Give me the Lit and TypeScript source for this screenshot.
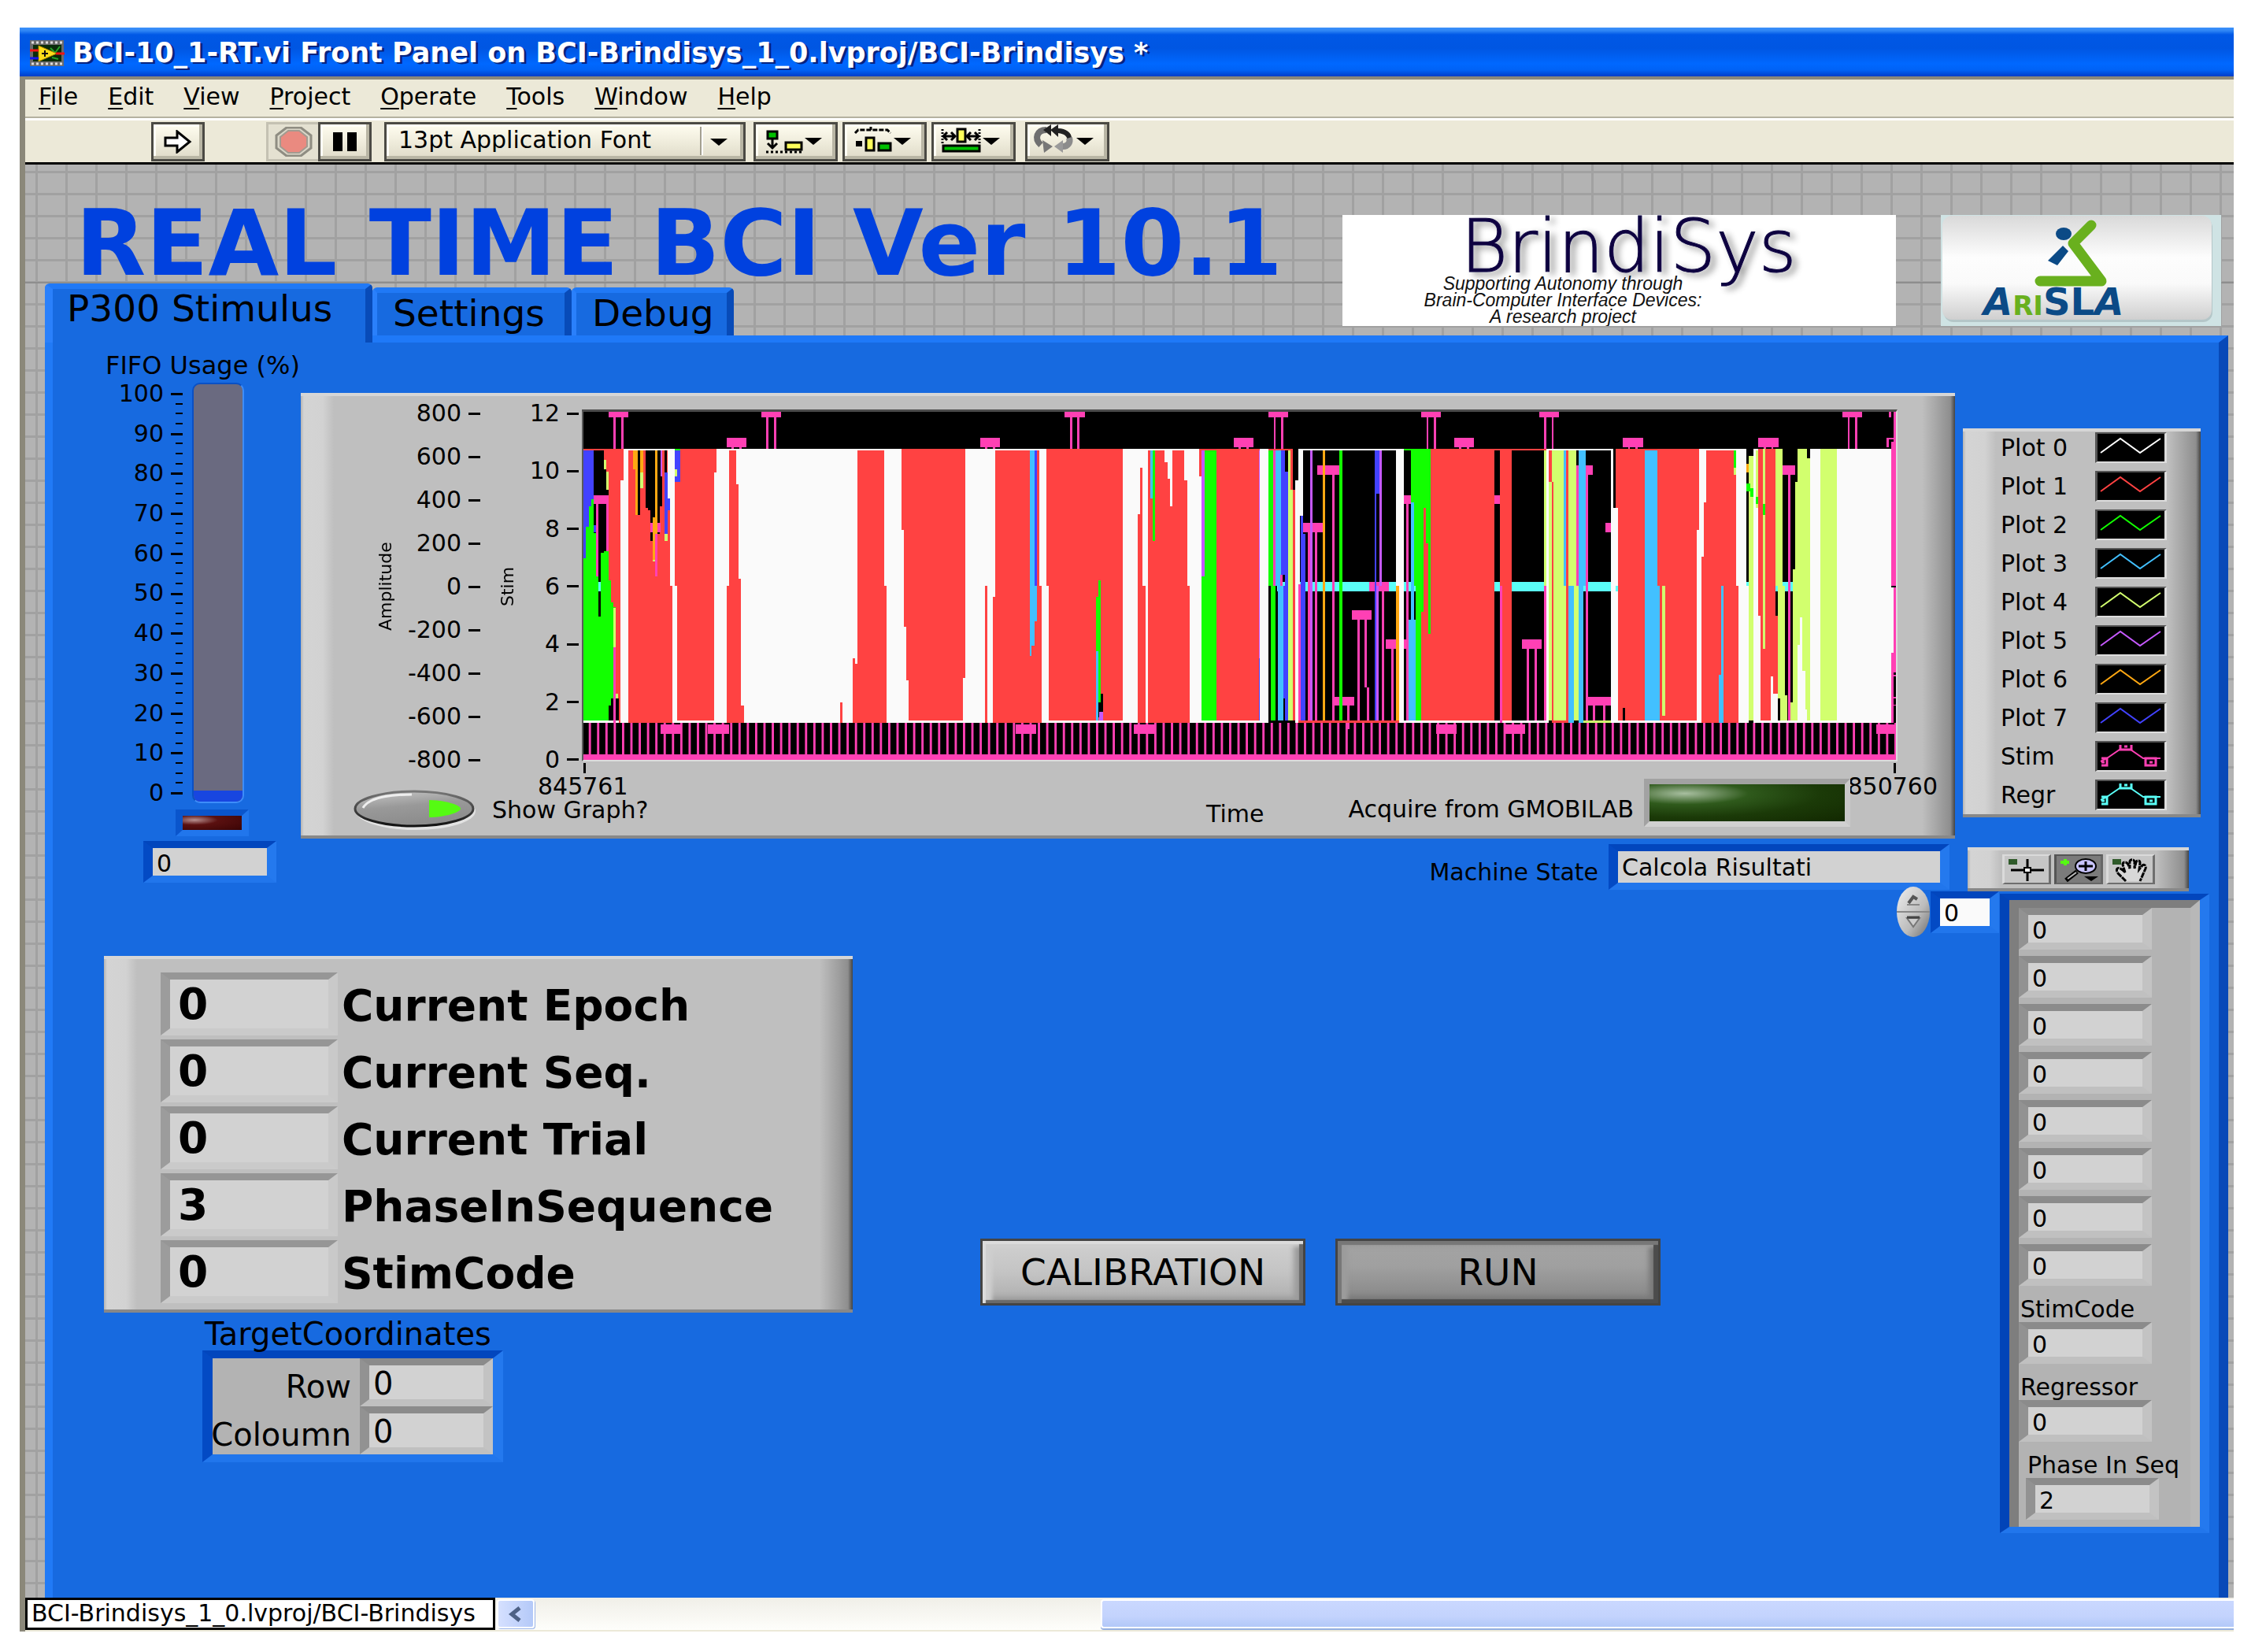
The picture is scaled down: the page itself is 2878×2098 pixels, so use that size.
import { LitElement, html, svg, css, nothing } from "lit";
import { customElement, property } from "lit/decorators.js";

const PINK = "#ff40b4";
const RED = "#ff4242";
const GREEN = "#12ff00";
const BLUE = "#4242ff";
const SKY = "#42c0ff";
const LIME = "#d2ff6e";
const PURPLE = "#c659ff";
const ORANGE = "#ffa812";
const CYAN = "#5afff8";
const WHITE = "#fafafa";
const BLACK = "#000";

/* One painted block of the chart: colour, left, right, top, bottom. */
type Block = [string, number, number, number?, number?];
/* One stepped outline of the chart: colour, points. */
type Outline = [string, string];

const earlyOutlines: Outline[] = [
  [BLUE, "37,216 60,216 60,530 43,530 43,627 37,627"],
  [GREEN, "37,627 43,627 43,508 49,508 49,430 54,430 54,402 60,402 60,530 65,530 65,695 70,695 70,850 76,850 76,605 82,605 82,600 92,600 92,712 98,712 98,796 109,796 109,1163 98,1163 98,1190 92,1190 92,1247 37,1247"],
  [RED, "82,210 125,210 125,330 119,330 119,1254 115,1254 115,1163 109,1163 109,812 104,812 104,796 98,796 98,712 92,712 92,295 87,295 87,252 82,252"],
  [RED, "136,216 223,216 223,443 228,443 228,732 234,732 234,1254 136,1254"],
  [BLACK, "157,216 217,216 217,430 206,430 206,533 190,533 190,562 185,562 185,443 180,443 180,436 174,436 174,216 163,216 163,463 157,463"],
  [RED, "251,210 332,210 332,300 327,300 327,1247 245,1247 245,732 239,732 239,315 251,315"],
  [RED, "360,216 375,216 375,345 381,345 381,704 386,704 386,1190 392,1190 392,1254 354,1254 354,732 360,732"],
  [RED, "643,216 702,216 702,733 708,733 708,1254 632,1254 632,1008 638,1008 638,1029 643,1029"],
  [RED, "740,210 882,210 882,1085 877,1085 877,1247 757,1247 757,1093 752,1093 752,888 746,888 746,520 740,520"],
  [RED, "948,216 1045,216 1045,732 1051,732 1051,1254 943,1254 943,775 948,775"],
  [RED, "1062,210 1231,210 1231,1247 1067,1247 1067,732 1062,732"],
  [RED, "1269,280 1274,280 1274,732 1280,732 1280,1254 1264,1254 1264,458 1269,458"],
  [RED, "1286,216 1323,216 1323,260 1329,260 1329,322 1334,322 1334,430 1340,430 1340,216 1367,216 1367,330 1373,330 1373,732 1378,732 1378,1254 1286,1254"],
];

const earlyBlocks: Block[] = [
  [RED, 37, 125, 210, 216],
  [PINK, 60, 92, 387, 421],
  [PINK, 65, 70, 421, 695],
  [PINK, 87, 92, 421, 600],
  [BLUE, 60, 65, 500, 527],
  [CYAN, 70, 76, 717, 752],
  [LIME, 82, 87, 252, 288],
  [LIME, 87, 92, 295, 365],
  [LIME, 104, 109, 815, 966],
  [PINK, 104, 109, 966, 1254],
  [LIME, 109, 114, 1143, 1163],
  [ORANGE, 147, 157, 216, 288],
  [ORANGE, 152, 157, 288, 463],
  [ORANGE, 163, 169, 216, 300],
  [LIME, 163, 169, 300, 358],
  [RED, 169, 174, 216, 436],
  [PINK, 185, 207, 492, 527],
  [ORANGE, 195, 201, 216, 533],
  [ORANGE, 190, 196, 471, 632],
  [LIME, 190, 196, 632, 640],
  [PINK, 196, 201, 533, 695],
  [PURPLE, 207, 212, 216, 315],
  [RED, 212, 217, 216, 443],
  [BLACK, 217, 222, 216, 300],
  [BLUE, 217, 223, 300, 535],
  [LIME, 217, 223, 535, 562],
  [BLUE, 223, 228, 400, 443],
  [GREEN, 239, 251, 210, 216],
  [BLUE, 239, 251, 216, 336],
  [LIME, 239, 245, 288, 315],
  [RED, 605, 610, 1178, 1254],
  [RED, 926, 931, 732, 1254],
  [SKY, 1024, 1035, 216, 960],
  [SKY, 1024, 1029, 960, 1000],
  [BLUE, 1035, 1040, 216, 732],
  [SKY, 1035, 1040, 732, 866],
  [GREEN, 1176, 1182, 712, 1178],
  [GREEN, 1171, 1176, 775, 980],
  [SKY, 1171, 1176, 980, 1247],
  [BLACK, 1182, 1187, 1143, 1247],
  [BLACK, 1176, 1182, 1178, 1235],
  [PURPLE, 1178, 1187, 1213, 1247],
  [SKY, 1291, 1296, 216, 400],
  [GREEN, 1296, 1302, 216, 562],
  [RED, 1400, 1536, 210, 216],
  [RED, 1400, 1405, 216, 315],
  [PURPLE, 1405, 1411, 216, 695],
  [GREEN, 1411, 1438, 216, 1247],
  [GREEN, 1405, 1411, 695, 1247],
  [RED, 1438, 1531, 216, 1247],
  [PURPLE, 1531, 1536, 216, 1008],
  [BLUE, 1531, 1536, 1008, 1247],
];

const lateUnder: Block[] = [
  [BLACK, 19, 1397],
  [CYAN, 38, 1180, 717, 752],
  [PINK, 128, 180, 273, 308],
  [PINK, 161, 166, 308],
  [PINK, 95, 139, 492, 527],
  [PINK, 106, 112, 527],
  [PINK, 123, 128, 527],
  [PINK, 242, 286, 717, 752],
  [PINK, 259, 264, 752],
  [PINK, 270, 275, 752],
  [PINK, 205, 248, 824, 860],
  [PINK, 216, 221, 860],
  [PINK, 232, 237, 860, 1120],
  [PINK, 237, 242, 1120],
  [PINK, 280, 329, 937, 972],
  [PINK, 292, 297, 972],
  [PINK, 324, 329, 421],
  [PINK, 161, 210, 1156, 1190],
  [PINK, 194, 199, 1190, 1280],
  [PINK, 319, 335, 387, 421],
  [PINK, 520, 531, 387, 421],
  [PINK, 580, 624, 937, 972],
  [PINK, 591, 596, 972],
  [PINK, 608, 613, 972],
  [PINK, 700, 738, 273, 308],
  [PINK, 722, 727, 308],
  [PINK, 766, 777, 492, 527],
  [PINK, 727, 777, 1156, 1190],
  [PINK, 738, 743, 1190],
  [PINK, 760, 765, 1190],
  [PINK, 1158, 1185, 273, 308],
  [PINK, 1169, 1174, 308],
];

const lateOutlines: Outline[] = [
  [GREEN, "335,216 378,216 378,915 373,915 373,570 368,570 368,832 357,832 357,1247 346,1247 346,732 340,732 340,415 335,415"],
  [RED, "378,210 520,210 520,1247 357,1247 357,832 362,832 362,435 368,435 368,570 373,570 373,915 378,915"],
  [RED, "787,210 972,210 972,520 967,520 967,1247 793,1247 793,435 787,435"],
  [WHITE, "972,210 1077,210 1077,732 1082,732 1082,1254 967,1254 967,520 972,520"],
  [RED, "989,216 1050,216 1054,300 1054,732 1060,732 1060,1254 978,1254 978,620 983,620 983,415 989,415"],
  [LIME, "1190,210 1212,210 1212,245 1218,245 1218,1247 1174,1247 1174,1178 1179,1178 1179,670 1185,670 1185,336 1190,336"],
  [WHITE, "1196,852 1201,852 1201,1057 1207,1057 1207,1205 1212,1205 1212,1254 1190,1254 1190,958 1196,958"],
];

const lateBlocks: Block[] = [
  [GREEN, 19, 30, 216, 732],
  [GREEN, 24, 35, 732, 1247],
  [PINK, 30, 36, 216, 732],
  [SKY, 36, 47, 216, 732],
  [SKY, 41, 52, 732, 1247],
  [PINK, 46, 51, 690, 732],
  [BLUE, 47, 57, 216, 690],
  [BLUE, 52, 63, 732, 1163],
  [BLUE, 57, 63, 295, 1247],
  [LIME, 63, 68, 216, 1247],
  [RED, 68, 74, 216, 365],
  [LIME, 68, 74, 365, 1247],
  [RED, 74, 79, 365, 1247],
  [WHITE, 85, 96, 210, 465],
  [WHITE, 79, 90, 330, 725],
  [WHITE, 79, 85, 725, 1254],
  [PINK, 85, 91, 725, 1254],
  [BLUE, 91, 96, 465, 1254],
  [BLUE, 96, 101, 535, 1254],
  [RED, 19, 74, 210, 216],
  [WHITE, 85, 319, 210, 216],
  [PURPLE, 112, 117],
  [ORANGE, 139, 145],
  [GREEN, 177, 183],
  [BLUE, 254, 265, 216, 380],
  [BLUE, 254, 259, 380],
  [PURPLE, 265, 270, 216, 732],
  [PURPLE, 259, 264, 732],
  [WHITE, 302, 319, 210],
  [ORANGE, 302, 308, 732],
  [RED, 85, 308, 1247, 1254],
  [WHITE, 308, 640, 1247, 1254],
  [GREEN, 319, 378, 210, 216],
  [SKY, 335, 341, 415, 860],
  [SKY, 330, 346, 860, 1247],
  [RED, 531, 558, 210, 1247],
  [RED, 378, 634, 210, 216],
  [PINK, 531, 537, 732],
  [LIME, 629, 635, 216, 732],
  [PINK, 629, 635, 732, 1247],
  [LIME, 640, 700, 216, 1247],
  [WHITE, 634, 640, 210],
  [RED, 640, 646, 216, 336],
  [RED, 646, 651, 336, 1247],
  [SKY, 673, 678, 216, 732],
  [RED, 678, 684, 216, 1247],
  [SKY, 684, 695, 732, 1254],
  [LIME, 695, 706, 732, 1247],
  [PINK, 700, 706, 308, 732],
  [SKY, 706, 722, 216, 732],
  [SKY, 706, 716, 732, 1254],
  [LIME, 716, 782, 1247, 1254],
  [RED, 646, 684, 1247, 1254],
  [WHITE, 640, 782, 210, 216],
  [WHITE, 777, 782, 210],
  [WHITE, 782, 787, 435],
  [WHITE, 787, 793, 435, 1254],
  [CYAN, 787, 793, 732, 752],
  [SKY, 852, 880, 216, 732],
  [SKY, 852, 886, 732, 1247],
  [LIME, 891, 897, 732, 1228],
  [WHITE, 793, 972, 1247, 1254],
  [BLACK, 803, 809, 1198, 1247],
  [SKY, 1021, 1026, 732, 1254],
  [SKY, 1016, 1021, 1072, 1254],
  [GREEN, 1050, 1054, 216, 280],
  [LIME, 1050, 1054, 280, 308],
  [BLACK, 1077, 1082, 216, 717],
  [ORANGE, 1077, 1082, 265, 300],
  [LIME, 1082, 1092, 235, 1247],
  [WHITE, 1092, 1104, 210],
  [LIME, 1098, 1103, 216, 436],
  [GREEN, 1077, 1086, 340, 372],
  [GREEN, 1086, 1092, 358, 393],
  [GREEN, 1098, 1103, 393, 421],
  [WHITE, 1103, 1109, 845],
  [RED, 1103, 1141, 210, 845],
  [RED, 1109, 1147, 845, 1247],
  [LIME, 1114, 1119, 210, 972],
  [GREEN, 1114, 1119, 421, 463],
  [WHITE, 1131, 1136, 1078],
  [WHITE, 1136, 1147, 1143],
  [LIME, 1141, 1158, 210, 732],
  [LIME, 1147, 1163, 732, 1163],
  [LIME, 1152, 1168, 1150, 1247],
  [WHITE, 1109, 1397, 1247, 1254],
  [WHITE, 1218, 1397, 210],
  [LIME, 1240, 1278, 210, 1247],
  [PINK, 1403, 1408, 68, 210],
  [PINK, 1392, 1397, 68, 90],
  [PINK, 1387, 1403, 167, 173],
  [PINK, 1387, 1392, 173, 203],
  [PINK, 1397, 1408, 182, 732],
  [WHITE, 1397, 1403, 738, 988],
  [PINK, 1403, 1408, 738, 988],
  [PINK, 1397, 1408, 988, 1062],
  [PINK, 1397, 1402, 1062, 1254],
  [PINK, 1402, 1408, 1072, 1078],
  [PINK, 1402, 1408, 1156, 1162],
  [PINK, 1402, 1408, 1185, 1190],
];

/* Left edges of the square stimulus markers, by height on the chart. */
const tallMarkers = [92, 430, 1102, 1552, 1890, 2151, 2822];
const shortMarkers = [354, 915, 1476, 1963, 2337, 2637];
const lowMarkers = [208, 313, 993, 1255, 1923, 2075, 2898];

const block = ([fill, x1, x2, y1 = 216, y2 = 1254]: Block) =>
  svg`<rect x=${x1} y=${y1} width=${x2 - x1} height=${y2 - y1} fill=${fill} />`;
const outline = ([fill, points]: Outline) => svg`<polygon points=${points} fill=${fill} />`;

const legend: { name: string; color: string; marked?: boolean }[] = [
  { name: "Plot 0", color: "#ffffff" },
  { name: "Plot 1", color: RED },
  { name: "Plot 2", color: GREEN },
  { name: "Plot 3", color: SKY },
  { name: "Plot 4", color: LIME },
  { name: "Plot 5", color: PURPLE },
  { name: "Plot 6", color: ORANGE },
  { name: "Plot 7", color: BLUE },
  { name: "Stim", color: PINK, marked: true },
  { name: "Regr", color: CYAN, marked: true },
];

const shared = css`
  :host {
    display: block;
    font-family: "DejaVu Sans", Verdana, sans-serif;
    font-size: 30px;
    line-height: 30px;
    color: #000;
  }
  *,
  *::before {
    box-sizing: border-box;
  }
  button,
  input,
  select {
    font: inherit;
    color: inherit;
    margin: 0;
    padding: 0;
    border-radius: 0;
  }
  svg {
    display: block;
  }
  .field {
    display: block;
    width: 169px;
    height: 53px;
    padding: 3px 0 0 5px;
    background: #d2d2d2;
    border: solid;
    border-width: 9px 12px;
    border-color: #8b8b8b #c3c3c3 #c0c0c0 #929292;
    outline: none;
  }
  .field.blue {
    border-color: #0246bd #2479ee #2176ec #034ac4;
  }
  .field.white {
    background: #fafafa;
  }
  .raised {
    background:
      linear-gradient(#d6d6d6, #d6d6d6) top / 100% 4px no-repeat,
      linear-gradient(#888, #888) bottom / 100% 4px no-repeat,
      linear-gradient(90deg, #b4b4b4, #d4d4d4 4px, #d2d2d2 28px, #bfbfbf 42px, #bfbfbf calc(100% - 42px), #8e8e8e calc(100% - 6px), #444 100%);
  }
`;

@customElement("title-bar")
class TitleBar extends LitElement {
  static styles = [
    shared,
    css`
      .bar {
        display: flex;
        align-items: center;
        gap: 10px;
        height: 62px;
        padding: 2px 13px 0;
        background: linear-gradient(#3c91fb, #2f86f5 4px, #0058e6 9px, #0056e2 26px, #0068ff 46px, #0062f5 54px, #003dc8);
      }
      .name {
        margin: 0;
        font-size: 35px;
        font-weight: 700;
        line-height: 40px;
        color: #fff;
        white-space: nowrap;
        text-shadow: 3px 2px 0 #06237e;
      }
    `,
  ];
  render() {
    return html`
      <header class="bar">
        <svg width="44" height="33" viewBox="0 0 44 33" aria-hidden="true">
          <rect width="43" height="33" fill="#6b6b6b" />
          <rect x="4" y="6" width="36" height="21" fill="#0a2c0a" />
          <path d="M2 3H42M2 30H42" stroke="#ddd" stroke-width="3" stroke-dasharray="3 3" />
          <path d="M26 10l6 6 6-8M28 22l8 2" stroke="#27a327" stroke-width="2" fill="none" />
          <path d="M11 7V27L34 17Z" fill="#ffdf1a" stroke="#b38a00" />
          <path d="M15 17H23M19 13V21" stroke="#111" stroke-width="2" />
          <path d="M0 13H11M33 17H44" stroke="#f01414" stroke-width="3" />
          <path d="M0 23H11" stroke="#1414f0" stroke-width="3" />
        </svg>
        <h1 class="name">BCI-10_1-RT.vi Front Panel on BCI-Brindisys_1_0.lvproj/BCI-Brindisys *</h1>
      </header>
    `;
  }
}

@customElement("menu-bar")
class MenuBar extends LitElement {
  static styles = [
    shared,
    css`
      .menu {
        display: flex;
        align-items: center;
        gap: 38px;
        height: 52px;
        padding: 0 16px 6px 17px;
        background: #ece9d8;
        border-bottom: 3px solid #fff;
        box-shadow: inset 0 -2px #b4b1a0;
      }
      .item {
        background: none;
        border: 0;
      }
      u {
        text-underline-offset: 4px;
        text-decoration-thickness: 2px;
      }
    `,
  ];
  render() {
    const names = ["File", "Edit", "View", "Project", "Operate", "Tools", "Window", "Help"];
    return html`<nav class="menu">
      ${names.map((n) => html`<button class="item"><u>${n[0]}</u>${n.slice(1)}</button>`)}
    </nav>`;
  }
}

@customElement("tool-bar")
class ToolBar extends LitElement {
  static styles = [
    shared,
    css`
      .bar {
        display: flex;
        align-items: center;
        height: 56px;
        padding-left: 160px;
        background: #ece9d8;
        border-bottom: 3px solid #000;
      }
      .tool {
        display: grid;
        place-items: center;
        width: 68px;
        height: 50px;
        border: 3px solid #4b4a44;
        background: linear-gradient(#fffdf0, #ece9d8 60%, #dedac8);
        box-shadow: inset -4px -4px #b9b6a5, inset 3px 3px #fffff6;
      }
      .tool.off {
        margin-left: 78px;
        background: #e4e1d1;
        border-color: #c4c1b2;
        border-right: 0;
        box-shadow: none;
        width: 66px;
      }
      .tool.wide {
        width: 107px;
        margin-right: 6px;
      }
      .tool.last {
        margin-left: 6px;
      }
      .font {
        position: relative;
        flex: none;
        width: 459px;
        margin: 0 10px 0 16px;
      }
      .font select {
        appearance: none;
        display: block;
        width: 100%;
        height: 50px;
        padding: 0 66px 4px 15px;
        border: 3px solid #4b4a44;
        background: linear-gradient(#fffdf0, #ece9d8 60%, #dedac8);
        box-shadow: inset -4px -4px #b9b6a5, inset 3px 3px #fffff6;
      }
      .font svg {
        position: absolute;
        right: 22px;
        top: 6px;
        pointer-events: none;
      }
    `,
  ];
  render() {
    const arrow = svg`<path d="M65 20H87L76 29Z" fill="#000" />`;
    const icon = (body: unknown) => html`<svg width="101" height="44" viewBox="3 3 101 44">${body}${arrow}</svg>`;
    return html`
      <div class="bar" role="toolbar">
        <button class="tool" aria-label="Run">
          <svg width="36" height="30" viewBox="0 0 36 30">
            <path d="M2 10H17V2L33 15L17 28V20H2Z" fill="#fff" stroke="#000" stroke-width="3" />
          </svg>
        </button>
        <button class="tool off" aria-label="Abort" disabled>
          <svg width="48" height="38" viewBox="0 0 48 38">
            <path d="M15 1H33L46 11V27L33 37H15L2 27V11Z" fill="#dad7c8" stroke="#8f8d82" stroke-width="3" />
            <path d="M17 5H31L41 13V25L31 33H17L7 25V13Z" fill="#ea8a80" stroke="#a39b90" stroke-width="2" />
          </svg>
        </button>
        <button class="tool" aria-label="Pause">
          <svg width="34" height="26" viewBox="0 0 34 26"><path d="M2 1H14V25H2ZM20 1H32V25H20Z" /></svg>
        </button>
        <div class="font">
          <select aria-label="Font">
            <option>13pt Application Font</option>
          </select>
          <svg width="36" height="36" viewBox="0 0 36 36">
            <path d="M1 0V36" stroke="#a3a090" stroke-width="2" />
            <path d="M3 0V36" stroke="#fff" stroke-width="2" />
            <path d="M13 15H35L24 24Z" />
          </svg>
        </div>
        <button class="tool wide" aria-label="Align">
          ${icon(svg`
            <rect x="18" y="12" width="12" height="9" fill="#00c000" stroke="#000" stroke-width="3" />
            <path d="M24 22V32M18 27L24 33L30 27" fill="none" stroke="#000" stroke-width="3" />
            <rect x="41" y="26" width="20" height="9" fill="#ffff5a" stroke="#000" stroke-width="3" />
            <path d="M16 38H62" stroke="#000" stroke-width="3" stroke-dasharray="3 3" />`)}
        </button>
        <button class="tool wide" aria-label="Distribute">
          ${icon(svg`
            <path d="M16 14L20 10H57L61 14" fill="none" stroke="#000" stroke-width="3" stroke-dasharray="6 2" />
            <path d="M36 10V6" stroke="#000" stroke-width="3" />
            <rect x="17" y="24" width="8" height="7" />
            <rect x="30" y="20" width="10" height="16" fill="#ffff5a" stroke="#000" stroke-width="3" />
            <rect x="46" y="27" width="15" height="9" fill="#00c000" stroke="#000" stroke-width="3" />`)}
        </button>
        <button class="tool wide" aria-label="Resize">
          ${icon(svg`
            <path d="M14 9V27M61 9V27" stroke="#000" stroke-width="3" stroke-dasharray="2 2" />
            <path d="M15 18H30M60 18H45M20 13L15 18L20 23M55 13L60 18L55 23M25 13L30 18L25 23M50 13L45 18L50 23" fill="none" stroke="#000" stroke-width="3" />
            <rect x="33" y="9" width="10" height="16" fill="#ffff5a" stroke="#000" stroke-width="3" />
            <rect x="15" y="30" width="46" height="7" fill="#00c000" stroke="#000" stroke-width="3" />`)}
        </button>
        <button class="tool wide last" aria-label="Reorder">
          ${icon(svg`
            <path d="M20 29C11 21 15 10 27 10" fill="none" stroke="#6f6f6f" stroke-width="8" />
            <path d="M32 10L42 3V8C52 8 59 14 59 20L54 25C54 18 50 15 42 14V19Z" fill="#222" />
            <path d="M23 10L33 3V18Z" fill="#222" />
            <path d="M56 20C58 26 54 31 48 31" fill="none" stroke="#8c8c8c" stroke-width="8" />
            <path d="M48 23V39L37 31Z" fill="#9a9a9a" />
            <path d="M22 23L35 31L24 39Z" fill="#777" />`)}
        </button>
      </div>
    `;
  }
}

@customElement("panel-header")
class PanelHeader extends LitElement {
  static styles = [
    shared,
    css`
      .head {
        display: flex;
        height: 217px;
        padding: 0 16px 0 25px;
      }
      .left {
        flex: 1;
        min-width: 0;
        display: flex;
        flex-direction: column;
        justify-content: space-between;
      }
      .title {
        margin: 50px 0 0 39px;
        font-size: 116px;
        font-weight: 700;
        line-height: 100px;
        color: #0041df;
        white-space: nowrap;
      }
      .tabs {
        display: flex;
        align-items: flex-end;
        height: 66px;
      }
      .tab {
        height: 61px;
        width: 206px;
        font-size: 47px;
        line-height: 44px;
        text-align: left;
        padding: 0 0 2px 20px;
        background: #176ae0;
        border: solid;
        border-width: 7px 9px 0 6px;
        border-color: #2079f6 #084bb8 #176ae0 #2a80fb;
        border-radius: 6px 6px 0 0;
        white-space: nowrap;
      }
      .tab.mid {
        width: 253px;
      }
      .tab.on {
        position: relative;
        z-index: 1;
        width: 416px;
        height: 75px;
        margin-bottom: -9px;
        padding: 0 0 18px 18px;
        border-left-width: 10px;
      }
      .logo {
        margin-top: 64px;
        height: 141px;
        flex: none;
      }
      .brindi {
        width: 703px;
        margin-right: 57px;
        background: #fff;
      }
    `,
  ];
  render() {
    return html`
      <div class="head">
        <div class="left">
          <h2 class="title">REAL TIME BCI Ver 10.1</h2>
          <div class="tabs" role="tablist">
            <button class="tab on" role="tab" aria-selected="true">P300 Stimulus</button>
            <button class="tab mid" role="tab" aria-selected="false">Settings</button>
            <button class="tab" role="tab" aria-selected="false">Debug</button>
          </div>
        </div>
        <svg class="logo brindi" viewBox="0 0 703 141" role="img" aria-label="BrindiSys">
          <defs>
            <filter id="soft" x="-5%" y="-10%" width="115%" height="130%">
              <feDropShadow dx="6" dy="4" stdDeviation="4" flood-color="#000" flood-opacity="0.45" />
            </filter>
          </defs>
          <text x="150" y="72" font-family="DejaVu Sans" font-weight="200" font-size="92" fill="#0a0640" stroke="#0a0640" stroke-width="1" filter="url(#soft)">BrindiSys</text>
          <g font-family="Liberation Sans" font-style="italic" font-size="23" fill="#111" text-anchor="middle">
            <text x="280" y="95">Supporting Autonomy through</text>
            <text x="280" y="116">Brain-Computer Interface Devices:</text>
            <text x="280" y="137">A research project</text>
          </g>
        </svg>
        <svg class="logo" width="356" viewBox="0 0 356 141" role="img" aria-label="AriSLA">
          <defs>
            <linearGradient id="sheen" x2="0" y2="1">
              <stop offset="0" stop-color="#d9d9d9" />
              <stop offset="0.4" stop-color="#fdfdfd" />
              <stop offset="0.65" stop-color="#fafafa" />
              <stop offset="1" stop-color="#cfcfcf" />
            </linearGradient>
          </defs>
          <rect width="356" height="141" fill="#cfe3e4" />
          <rect x="4" y="4" width="341" height="132" rx="12" fill="#b4c6c8" />
          <rect x="2" y="1" width="342" height="132" rx="12" fill="url(#sheen)" />
          <ellipse cx="156" cy="24" rx="10" ry="8" fill="#0b4a86" />
          <path d="M155 39L162 46L148 64L136 58Z" fill="#0b4a86" />
          <path d="M191 13L168 36L204 84H126" fill="none" stroke="#69b01e" stroke-width="13" stroke-linecap="round" stroke-linejoin="round" />
          <text x="54" y="127" font-family="DejaVu Sans" font-weight="700" font-size="48" font-style="italic" fill="#0b4a86">A<tspan font-size="34" font-style="normal" fill="#69b01e">RI</tspan><tspan font-size="48" font-style="normal">SL</tspan>A</text>
        </svg>
      </div>
    `;
  }
}

@customElement("fifo-gauge")
class FifoGauge extends LitElement {
  static styles = [
    shared,
    css`
      .gauge {
        width: 315px;
        padding-top: 12px;
      }
      .name {
        display: block;
        padding-left: 67px;
        font-size: 32px;
        line-height: 34px;
        white-space: nowrap;
      }
      .row {
        display: flex;
        height: 537px;
        margin-top: 4px;
      }
      .labels {
        width: 141px;
        display: flex;
        flex-direction: column;
        justify-content: space-between;
        text-align: right;
      }
      .ticks {
        margin: 14px 12px 14px 9px;
      }
      .tube {
        width: 66px;
        margin: 1px 0 2px;
        display: flex;
        align-items: flex-end;
        background: #6a6a80;
        border: 2px solid;
        border-color: #0a50c4 #3d8dfa #3d8dfa #0a50c4;
        border-radius: 10px;
        overflow: hidden;
      }
      .fill {
        width: 100%;
        height: 14px;
        background: #1846e0;
      }
      .led {
        width: 93px;
        height: 34px;
        margin: 6px 0 6px 156px;
        border: solid;
        border-width: 8px 9px;
        border-color: #0a55cc #2176ec #2176ec #0a55cc;
        background: radial-gradient(ellipse at 20% 30%, #b89090, #5a1010 35%, #3a0404);
      }
      .field {
        margin-left: 115px;
      }
    `,
  ];
  render() {
    const labels = [100, 90, 80, 70, 60, 50, 40, 30, 20, 10, 0];
    return html`
      <section class="gauge">
        <label class="name" for="fifo">FIFO Usage (%)</label>
        <div class="row">
          <div class="labels">${labels.map((n) => html`<span>${n}</span>`)}</div>
          <svg class="ticks" width="15" height="510" viewBox="0 0 15 510" aria-hidden="true">
            ${Array.from({ length: 41 }, (_, i) => {
              const major = i % 4 === 0;
              return svg`<rect x=${major ? 0 : 6} y=${Math.round((i * 507) / 40)} width=${major ? 15 : 9} height=${major ? 3 : 2} />`;
            })}
          </svg>
          <div class="tube" role="meter" aria-valuenow="0"><div class="fill"></div></div>
        </div>
        <div class="led"></div>
        <input id="fifo" class="field blue" readonly value="0" />
      </section>
    `;
  }
}

@customElement("signal-chart")
class SignalChart extends LitElement {
  static styles = [
    shared,
    css`
      .panel {
        height: 566px;
        padding-top: 11px;
      }
      .plotrow {
        display: flex;
        height: 470px;
        padding: 0 73px 0 91px;
      }
      .axis {
        width: 34px;
        writing-mode: vertical-rl;
        transform: rotate(180deg);
        text-align: center;
        font-size: 22px;
        line-height: 34px;
      }
      .axis.stim {
        margin-left: 18px;
      }
      .scale {
        display: flex;
        flex-direction: column;
        justify-content: space-between;
        width: 103px;
      }
      .scale.narrow {
        width: 73px;
      }
      .mark {
        display: flex;
        align-items: center;
        justify-content: flex-end;
        gap: 9px;
      }
      .mark::after {
        content: "";
        width: 15px;
        height: 3px;
        background: #000;
      }
      .plot {
        flex: 1;
        min-width: 0;
        margin: 10px 0 0 4px;
      }
      .screen {
        width: 100%;
        height: 447px;
        border: solid;
        border-width: 3px 2px 2px 2px;
        border-color: #4c4c4c #dcdcdc #dcdcdc #5a5a5a;
        background: #000;
      }
      .ends {
        height: 13px;
        margin: 2px 2px 0;
        border: solid #000;
        border-width: 0 3px;
      }
      .times {
        display: flex;
        justify-content: space-between;
        padding: 4px 22px 0 301px;
      }
      .controls {
        display: flex;
        align-items: center;
        height: 61px;
        margin-top: -25px;
        padding: 0 133px 0 65px;
      }
      .toggle {
        width: 158px;
        height: 52px;
        margin-top: 16px;
        border: 0;
        background: none;
      }
      .text {
        padding-top: 16px;
        white-space: nowrap;
      }
      .show {
        padding: 18px 0 0 20px;
      }
      .time {
        margin: 0 107px 0 auto;
        padding-top: 28px;
      }
      .lamp {
        width: 262px;
        height: 61px;
        margin-left: 13px;
        border: solid;
        border-width: 7px;
        border-color: #a2a2a2 #c9c9c9 #d0d0d0 #a2a2a2;
        background: radial-gradient(ellipse at 18% 25%, #a8bfa0, #2f5a1c 28%, #1b3a08 60%, #122800);
      }
    `,
  ];
  render() {
    const amplitude = [800, 600, 400, 200, 0, -200, -400, -600, -800];
    const stim = [12, 10, 8, 6, 4, 2, 0];
    return html`
      <section class="panel raised">
        <div class="plotrow">
          <div class="axis">Amplitude</div>
          <div class="scale">${amplitude.map((n) => html`<span class="mark">${n}</span>`)}</div>
          <div class="axis stim">Stim</div>
          <div class="scale narrow">${stim.map((n) => html`<span class="mark">${n}</span>`)}</div>
          <div class="plot">
            <svg class="screen" viewBox="0 0 2904 1328" preserveAspectRatio="none" shape-rendering="crispEdges" role="img" aria-label="Signals">
              <defs>
                <pattern id="comb" width="18.4" height="130" patternUnits="userSpaceOnUse">
                  <rect x="11" width="5.4" height="130" fill=${PINK} />
                </pattern>
              </defs>
              <rect y="1186" width="2904" height="122" fill="url(#comb)" />
              <rect y="1307" width="2904" height="21" fill=${PINK} />
              <g transform="translate(-37 -68)">
                ${block([BLACK, 37, 119, 210])} ${block([WHITE, 119, 1552, 210])}
                ${block([WHITE, 37, 119, 1247, 1254])}
                ${earlyOutlines.map(outline)} ${earlyBlocks.map(block)}
                ${tallMarkers.map(
                  (x) => svg`${block([PINK, x, x + 44, 68, 90])}${block([PINK, x + 12, x + 17, 90, 210])}${block([PINK, x + 28, x + 33, 90, 210])}`,
                )}
                ${shortMarkers.map(
                  (x) => svg`${block([PINK, x, x + 44, 167, 203])}${block([PINK, x + 11, x + 16, 203, 210])}${block([PINK, x + 28, x + 33, 203, 210])}`,
                )}
                ${lowMarkers.map((x) => block([PINK, x, x + 46, 1261, 1298]))}
              </g>
              <g transform="translate(1496 -68)">
                ${block([WHITE, 0, 19, 210])} ${lateUnder.map(block)} ${lateOutlines.map(outline)}
                ${lateBlocks.map(block)}
              </g>
            </svg>
            <div class="ends"></div>
          </div>
        </div>
        <div class="times"><span>845761</span><span>850760</span></div>
        <div class="controls">
          <button class="toggle" id="show" role="switch" aria-checked="true">
            <svg width="158" height="52" viewBox="0 0 158 52">
              <defs>
                <linearGradient id="knob" x2="0.3" y2="1">
                  <stop offset="0" stop-color="#c8c8c8" />
                  <stop offset="0.5" stop-color="#999" />
                  <stop offset="1" stop-color="#8c8c8c" />
                </linearGradient>
                <linearGradient id="rim" x2="0" y2="1">
                  <stop offset="0" stop-color="#777" />
                  <stop offset="1" stop-color="#111" />
                </linearGradient>
              </defs>
              <ellipse cx="81" cy="28" rx="76" ry="24" fill="#e2e2e2" />
              <ellipse cx="79" cy="25" rx="75" ry="22" fill="url(#knob)" stroke="url(#rim)" stroke-width="3" />
              <path d="M14 24C22 10 50 7 76 7" fill="none" stroke="#eee" stroke-width="3" />
              <path d="M98 14C116 14 138 20 138 25S116 36 98 36Z" fill="#55fb12" />
            </svg>
          </button>
          <label class="text show" for="show">Show Graph?</label>
          <span class="text time">Time</span>
          <span class="text">Acquire from GMOBILAB</span>
          <div class="lamp"></div>
        </div>
      </section>
    `;
  }
}

@customElement("plot-legend")
class PlotLegend extends LitElement {
  static styles = [
    shared,
    css`
      .panel {
        width: 302px;
        padding: 0 43px 4px 48px;
      }
      .row {
        display: flex;
        align-items: center;
        justify-content: space-between;
        height: 49px;
      }
      .swatch {
        border: solid;
        border-width: 2px 3px;
        border-color: #555 #ddd #ddd #555;
        background: #000;
      }
    `,
  ];
  render() {
    return html`
      <section class="panel raised">
        ${legend.map(
          ({ name, color, marked }) => html`
            <div class="row">
              <span>${name}</span>
              <svg class="swatch" width="91" height="39" viewBox="0 0 85 35" aria-hidden="true">
                <path
                  d=${marked ? "M4 24L12 20L28 9H42L58 20H80" : "M4 24L29 6L54 24L80 6"}
                  fill="none" stroke=${color} stroke-width="2"
                />
                ${marked
                  ? svg`<path d="M5 20H12V29H5M5 25H9M29 3V9H43V3M34 5H38M61 20H74V29H61ZM66 25H70" fill="none" stroke=${color} stroke-width="3" />`
                  : nothing}
              </svg>
            </div>
          `,
        )}
      </section>
    `;
  }
}

@customElement("graph-palette")
class GraphPalette extends LitElement {
  static styles = [
    shared,
    css`
      .panel {
        display: flex;
        align-items: center;
        gap: 4px;
        width: 281px;
        height: 56px;
        padding-left: 44px;
      }
      .tool {
        width: 62px;
        height: 38px;
        border: solid;
        border-width: 2px 3px;
        border-color: #dadada #6e6e6e #6e6e6e #dadada;
        background: #c6c6c6;
      }
      .tool.on {
        background: #7b7b7b;
        border-color: #555 #666 #666 #555;
      }
    `,
  ];
  render() {
    return html`
      <div class="panel raised" role="toolbar">
        <button class="tool" aria-label="Cursor">
          <svg width="56" height="34" viewBox="0 0 56 34">
            <rect x="5" y="4" width="11" height="7" fill="#2f5a2a" />
            <path d="M8 18H50M29 4V32" stroke="#000" stroke-width="3" />
            <rect x="25" y="15" width="8" height="6" fill="#eee" stroke="#000" stroke-width="2" />
          </svg>
        </button>
        <button class="tool on" aria-label="Zoom">
          <svg width="56" height="34" viewBox="0 0 56 34">
            <path d="M5 8H16M11 4V12" stroke="#55fb12" stroke-width="4" />
            <path d="M26 20L12 31" stroke="#000" stroke-width="6" />
            <path d="M25 21L14 29" stroke="#bbb" stroke-width="2" />
            <ellipse cx="37" cy="13" rx="13" ry="9" fill="#c9c4ff" stroke="#000" stroke-width="2" />
            <path d="M28 13H46M37 7V19" stroke="#000" stroke-width="3" />
            <path d="M35 26H53L44 32Z" />
          </svg>
        </button>
        <button class="tool" aria-label="Pan">
          <svg width="56" height="34" viewBox="0 0 56 34">
            <rect x="5" y="4" width="11" height="7" fill="#2f5a2a" />
            <path d="M22 32L12 22C8 16 12 13 18 18L21 21L18 11C18 7 23 7 25 11L27 16V7C28 4 32 4 33 7V16L35 8C36 5 40 5 40 9L39 17L43 12C46 10 48 13 47 16L40 32" fill="#d8d8d8" stroke="#000" stroke-width="3" stroke-dasharray="7 1" />
          </svg>
        </button>
      </div>
    `;
  }
}

@customElement("value-array")
class ValueArray extends LitElement {
  static styles = [
    shared,
    css`
      .frame {
        width: 266px;
        border: solid;
        border-width: 8px 12px;
        border-color: #0246bd #2479ee #2176ec #0244b8;
      }
      .box {
        display: grid;
        gap: 8px;
        padding-bottom: 9px;
        background: #b3b3b3;
        border: solid;
        border-width: 10px 12px 0;
        border-color: #7e7e7e #b8b8b8 #b8b8b8 #7e7e7e;
      }
      .group {
        display: grid;
      }
      .group label {
        height: 38px;
        padding: 7px 0 0 2px;
        white-space: nowrap;
      }
      .group.shift .field,
      .group.shift label {
        margin-left: 9px;
      }
    `,
  ];
  render() {
    return html`
      <section class="frame">
        <div class="box">
          ${Array.from({ length: 8 }, (_, i) => html`<input class="field" readonly value="0" aria-label="Element ${i}" />`)}
          <div class="group"><label for="code">StimCode</label><input id="code" class="field" readonly value="0" /></div>
          <div class="group"><label for="regr">Regressor</label><input id="regr" class="field" readonly value="0" /></div>
          <div class="group shift"><label for="phase">Phase In Seq</label><input id="phase" class="field" readonly value="2" /></div>
        </div>
      </section>
    `;
  }
}

@customElement("run-status")
class RunStatus extends LitElement {
  static styles = [
    shared,
    css`
      .panel {
        display: grid;
        grid-template-columns: 225px 1fr;
        align-items: center;
        gap: 5px 5px;
        width: 951px;
        padding: 21px 20px 12px 72px;
        font-size: 55px;
        font-weight: 700;
        line-height: 60px;
      }
      .panel .field {
        width: 225px;
        height: 80px;
        padding: 0 0 0 10px;
        border-color: #969696 #c9c9c9 #cacaca #9c9c9c;
      }
      .panel label {
        padding-top: 3px;
        white-space: nowrap;
      }
      .target {
        width: 382px;
        margin: 6px 0 0 125px;
        font-size: 40px;
      }
      .caption {
        line-height: 42px;
        padding-left: 3px;
        white-space: nowrap;
      }
      .grid {
        display: grid;
        grid-template-columns: 1fr 169px;
        align-items: center;
        column-gap: 11px;
        background: #b3b3b3;
        border: solid;
        border-width: 10px 13px;
        border-color: #0246bd #2479ee #2176ec #034ac4;
        text-align: right;
        line-height: 40px;
      }
      .grid label {
        padding-top: 10px;
        margin-left: -9px;
      }
      .grid .field {
        height: 61px;
      }
    `,
  ];
  render() {
    const rows: [string, string][] = [
      ["Current Epoch", "0"],
      ["Current Seq.", "0"],
      ["Current Trial", "0"],
      ["PhaseInSequence", "3"],
      ["StimCode", "0"],
    ];
    return html`
      <section class="panel raised">
        ${rows.map(
          ([name, value], i) => html`
            <input class="field" id="s${i}" readonly value=${value} />
            <label for="s${i}">${name}</label>
          `,
        )}
      </section>
      <section class="target">
        <div class="caption">TargetCoordinates</div>
        <div class="grid">
          <label for="row">Row</label><input class="field" id="row" readonly value="0" />
          <label for="col">Coloumn</label><input class="field" id="col" readonly value="0" />
        </div>
      </section>
    `;
  }
}

@customElement("mode-button")
class ModeButton extends LitElement {
  @property() label = "";
  @property({ type: Boolean }) pressed = false;
  static styles = [
    shared,
    css`
      .mode {
        display: block;
        width: 413px;
        height: 85px;
        font-size: 47px;
        line-height: 50px;
        border: 3px solid #444;
        background: linear-gradient(#d0d0d0, #c4c4c4 50%, #adadad);
        box-shadow: inset 4px 4px 1px #dcdcdc, inset -5px -4px 1px #6a6a6a, inset 12px 7px 5px #cfcfcf, inset -12px -8px 6px #9c9c9c;
      }
      .mode.pressed {
        background: linear-gradient(#a4a4a4, #a0a0a0 40%, #858585);
        box-shadow: inset 5px 5px 1px #777, inset -6px -5px 1px #4c4c4c, inset 13px 8px 5px #9c9c9c, inset -12px -9px 6px #7a7a7a;
      }
    `,
  ];
  render() {
    return html`<button class="mode ${this.pressed ? "pressed" : ""}" aria-pressed=${this.pressed}>${this.label}</button>`;
  }
}

@customElement("status-scroll")
class StatusScroll extends LitElement {
  static styles = [
    shared,
    css`
      .bar {
        display: flex;
        height: 43px;
        padding-bottom: 2px;
        background: #ece9d8;
      }
      .project {
        width: 597px;
        padding: 0 0 2px 5px;
        border: 3px solid #000;
        background: #fff;
        line-height: 33px;
        white-space: nowrap;
        overflow: hidden;
      }
      .track {
        flex: 1;
        display: flex;
        padding: 2px 0 2px 2px;
        background: linear-gradient(#f0efe8, #fefefb);
      }
      .arrow {
        width: 48px;
        display: grid;
        place-items: center;
        border: 2px solid #fff;
        border-radius: 4px;
        background: linear-gradient(90deg, #d5e0ff, #b4c9f8);
        box-shadow: 1px 1px #9ab4e8;
      }
      .gap {
        flex: 1;
      }
      .thumb {
        flex: 2;
        background: linear-gradient(#cad8ff, #c3d3fd 60%, #b2c8f8);
        border: solid #fff;
        border-width: 2px 0 2px 2px;
        border-radius: 4px 0 0 4px;
        box-shadow: 0 2px #93aee0;
      }
    `,
  ];
  render() {
    return html`
      <footer class="bar">
        <div class="project">BCI-Brindisys_1_0.lvproj/BCI-Brindisys</div>
        <div class="track">
          <button class="arrow" aria-label="Scroll left">
            <svg width="20" height="20" viewBox="0 0 20 20"><path d="M15 2L5 10L15 18" fill="none" stroke="#4d6185" stroke-width="5" /></svg>
          </button>
          <div class="gap"></div>
          <div class="thumb"></div>
        </div>
      </footer>
    `;
  }
}

@customElement("app-root")
class AppRoot extends LitElement {
  static styles = [
    shared,
    css`
      :host {
        background: #fff;
        padding: 35px 41px 26px 25px;
        box-sizing: border-box;
        min-height: 100vh;
      }
      .window {
        display: flex;
        flex-direction: column;
      }
      .client {
        border: solid;
        border-width: 4px 0 0 7px;
        border-color: #8b887a;
        box-shadow: inset 1px 1px #716f64;
      }
      .canvas {
        background-color: #b3b3b3;
        background-image:
          linear-gradient(#8e8e8e, #8e8e8e),
          repeating-linear-gradient(90deg, transparent 0 13px, #a1a1a1 13px 16px, transparent 16px 38px),
          repeating-linear-gradient(transparent 0 8px, #a1a1a1 8px 11px, transparent 11px 28px);
        background-size: 100% 2px, auto, auto;
        background-position: 0 149px, 0 0, 0 0;
        background-repeat: no-repeat, repeat, repeat;
      }
      .page {
        display: flex;
        margin: 0 7px 0 25px;
        padding-bottom: 82px;
        background: #176ae0;
        border: solid;
        border-width: 9px 12px 0 10px;
        border-color: #1f79f8 #0849b8 #176ae0 #217af6;
      }
      .main {
        flex: 1;
        min-width: 0;
      }
      .top {
        display: flex;
      }
      .graph {
        flex: 1;
        min-width: 0;
        padding-top: 64px;
      }
      .state {
        display: flex;
        justify-content: flex-end;
        align-items: center;
        gap: 13px;
        margin: 7px 7px 0 0;
      }
      .state label {
        padding-top: 14px;
      }
      .state .field {
        width: 433px;
        height: 58px;
        padding: 0 0 0 5px;
      }
      .index {
        display: flex;
        justify-content: flex-end;
        align-items: center;
        margin: -5px -56px 0 0;
      }
      .index .field {
        width: 87px;
      }
      .spin {
        width: 44px;
        height: 66px;
        border: 0;
        background: none;
      }
      .bottom {
        display: flex;
        align-items: flex-start;
        padding: 23px 0 0 65px;
      }
      .modes {
        display: flex;
        gap: 38px;
        margin: 359px 0 0 162px;
      }
      .side {
        flex: none;
        width: 335px;
        padding: 109px 0 0 10px;
      }
      .palette {
        margin: 38px 0 3px 6px;
      }
      .array {
        margin-left: 47px;
      }
    `,
  ];
  render() {
    return html`
      <div class="window">
        <title-bar></title-bar>
        <div class="client">
          <menu-bar></menu-bar>
          <tool-bar></tool-bar>
          <main class="canvas">
            <panel-header></panel-header>
            <div class="page">
              <div class="main">
                <div class="top">
                  <fifo-gauge></fifo-gauge>
                  <div class="graph">
                    <signal-chart></signal-chart>
                    <div class="state">
                      <label for="state">Machine State</label>
                      <input id="state" class="field blue" readonly value="Calcola Risultati" />
                    </div>
                    <div class="index">
                      <button class="spin" aria-label="Step index">
                        <svg width="44" height="66" viewBox="0 0 44 66">
                          <defs>
                            <linearGradient id="ball" x2="1" y2="1">
                              <stop offset="0" stop-color="#efefef" />
                              <stop offset="0.6" stop-color="#bcbcbc" />
                              <stop offset="1" stop-color="#6c6c6c" />
                            </linearGradient>
                          </defs>
                          <ellipse cx="22" cy="33" rx="21" ry="32" fill="url(#ball)" />
                          <path d="M1 33H43" stroke="#888" stroke-width="2" />
                          <path d="M16 22L22 14L27 17" fill="none" stroke="#555" stroke-width="4" />
                          <path d="M14 24H30" stroke="#888" stroke-width="2" />
                          <path d="M14 41H30L22 52Z" fill="#ccc" stroke="#777" stroke-width="2" />
                          <path d="M14 40H30" stroke="#444" stroke-width="3" />
                        </svg>
                      </button>
                      <input class="field blue white" value="0" aria-label="Index" />
                    </div>
                  </div>
                </div>
                <div class="bottom">
                  <run-status></run-status>
                  <div class="modes">
                    <mode-button label="CALIBRATION"></mode-button>
                    <mode-button label="RUN" pressed></mode-button>
                  </div>
                </div>
              </div>
              <aside class="side">
                <plot-legend></plot-legend>
                <graph-palette class="palette"></graph-palette>
                <value-array class="array"></value-array>
              </aside>
            </div>
          </main>
          <status-scroll></status-scroll>
        </div>
      </div>
    `;
  }
}
